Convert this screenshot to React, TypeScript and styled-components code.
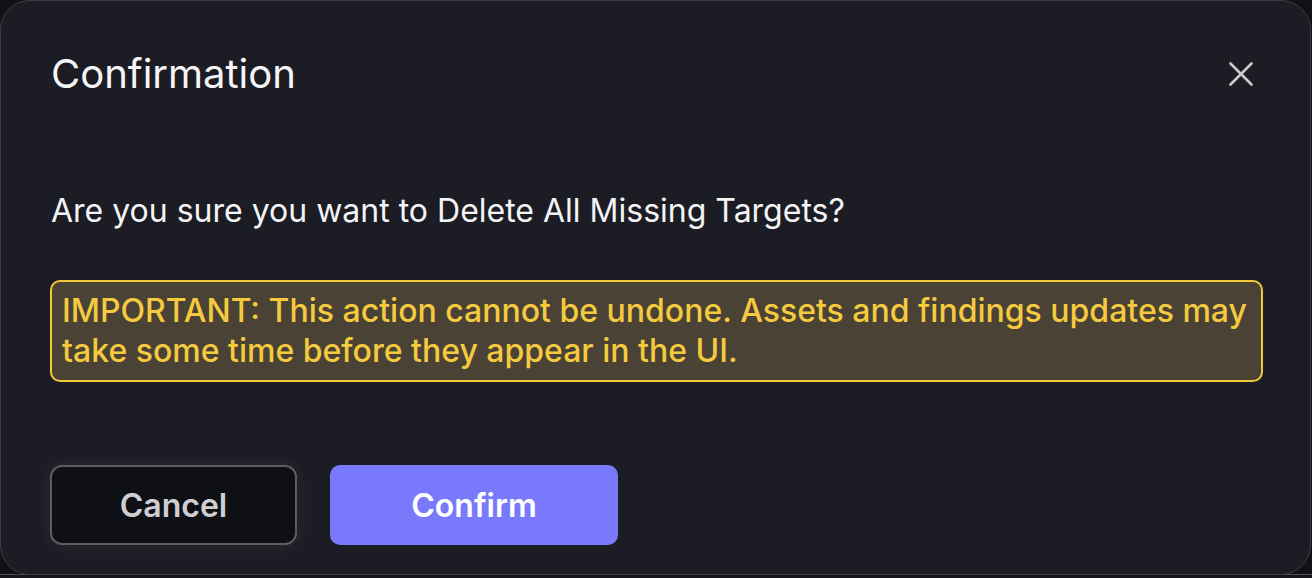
import styled, { createGlobalStyle } from 'styled-components';

const GlobalStyle = createGlobalStyle`
    html, body {
        margin: 0;
        padding: 0;
        background: #111217;
        font-family: Inter, "Noto Sans", "Liberation Sans", sans-serif;
        overflow: hidden;
    }
`;

const Page = styled.div`
    position: relative;
    width: 1312px;
    height: 578px;
    overflow: hidden;
    background: #111217;
`;

const BackStrip = styled.div`
    position: absolute;
    left: 0;
    right: 0;
    bottom: 0;
    height: 3px;
    border-top: 1px solid #4f5056;
    background: #15161b;
`;

const Overlay = styled.div`
    position: absolute;
    inset: 0;
`;

const Modal = styled.div`
    box-sizing: border-box;
    width: 1311px;
    height: 575px;
    background: #1b1c24;
    border: 1px solid #3c3d45;
    border-radius: 30px;
    padding: 0 50px 0 49px;
    display: flex;
    flex-direction: column;
    color: #f4f4f6;
`;

const Header = styled.div`
    display: flex;
    align-items: center;
    justify-content: space-between;
    margin-top: 48px;
    height: 50px;
`;

const Title = styled.h2`
    margin: 0 0 0 1px;
    font-size: 40px;
    font-weight: 400;
    line-height: 50px;
    color: #f5f5f7;
`;

const CloseButton = styled.button`
    background: none;
    border: none;
    padding: 0;
    margin-right: 7px;
    width: 24px;
    height: 24px;
    display: flex;
    cursor: pointer;
    color: #c9c9ce;
`;

const Message = styled.p`
    margin: 92px 0 0 1px;
    font-size: 32px;
    line-height: 40px;
    color: #f4f4f6;
`;

const Warning = styled.div`
    margin: 49px -3px 0 0;
    border: 2px solid #f2c93a;
    border-radius: 10px;
    background: #4a4335;
    padding: 9px 10px;
    color: #f5ca3f;
    font-size: 32px;
    font-weight: 500;
    line-height: 40px;
`;

const Footer = styled.div`
    display: flex;
    gap: 33px;
    margin-top: 83px;
`;

const Button = styled.button<{ $primary?: boolean }>`
    box-sizing: border-box;
    height: 80px;
    width: ${p => (p.$primary ? '288px' : '247px')};
    border-radius: ${p => (p.$primary ? '10px' : '12px')};
    border: ${p => (p.$primary ? 'none' : '2px solid #5c5d63')};
    background: ${p => (p.$primary ? '#7979fb' : '#0f1015')};
    color: ${p => (p.$primary ? '#ffffff' : '#cfcfd3')};
    box-shadow: ${p => (p.$primary ? 'none' : '0 0 18px rgba(255,255,255,0.07)')};
    font-family: inherit;
    font-size: 32px;
    font-weight: 600;
    cursor: pointer;
`;

function CloseIcon() {
    return (
        <svg width="24" height="24" viewBox="0 0 24 24" fill="none" stroke="currentColor" strokeWidth="2.6" strokeLinecap="round">
            <path d="M1.5 1.5 22.5 22.5" />
            <path d="M22.5 1.5 1.5 22.5" />
        </svg>
    );
}

export default function App() {
    return (
        <Page>
            <GlobalStyle />
            <BackStrip />
            <Overlay>
                <Modal role="dialog">
                    <Header>
                        <Title>Confirmation</Title>
                        <CloseButton aria-label="Close"><CloseIcon /></CloseButton>
                    </Header>
                    <Message>Are you sure you want to Delete All Missing Targets?</Message>
                    <Warning>
                        IMPORTANT: This action cannot be undone. Assets and findings updates may take some time before they appear in the UI.
                    </Warning>
                    <Footer>
                        <Button>Cancel</Button>
                        <Button $primary>Confirm</Button>
                    </Footer>
                </Modal>
            </Overlay>
        </Page>
    );
}
